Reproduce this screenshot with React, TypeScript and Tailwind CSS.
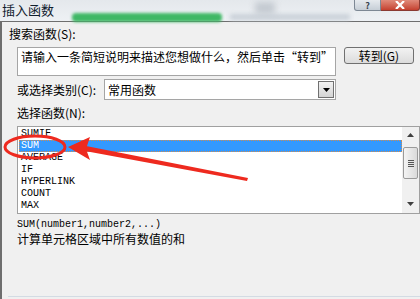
import React from 'react';

const cjk = "font-['SimSun','Noto_Sans_CJK_SC',sans-serif]";
const mono = "font-['Liberation_Mono','Noto_Sans_CJK_SC',monospace]";

const funcs = ['SUMIF', 'SUM', 'AVERAGE', 'IF', 'HYPERLINK', 'COUNT', 'MAX'];

export default function App() {
  return (
    <div className={`relative w-[420px] h-[299px] overflow-hidden bg-[#f0f0f0] text-[#000] ${cjk}`}>
      {/* Title bar (blurred aero glass) */}
      <div className="relative h-[21px] bg-gradient-to-b from-[#e4e8ec] to-[#eef1f4] flex items-start">
        <div className="absolute left-[72px] top-[13px] w-[150px] h-[9px] rounded-sm bg-[#3fb865] blur-[1.5px]" />
        <div className="absolute left-[230px] top-[14px] w-[120px] h-[6px] bg-[#c9d0d8] blur-[2px]" />
        <div className="absolute left-[255px] top-[2px] w-[20px] h-[12px] bg-[#c4cad1] blur-[3px]" />
        <span className="relative pl-[2px] pt-[2px] text-[13px] leading-[15px] text-[#10202e] font-['Noto_Sans_CJK_SC',sans-serif]">插入函数</span>
        <div className="ml-auto flex">
          <div className="w-[27px] h-[11px] rounded-bl-[3px] border border-t-0 border-[#7d8894] bg-gradient-to-b from-[#e6eaee] to-[#c6ced6] flex items-center justify-center text-[9px] leading-none text-[#3a4350] font-bold">
            ?
          </div>
          <div className="w-[39px] h-[11px] rounded-br-[3px] border border-t-0 border-l-0 border-[#8a3a32] bg-gradient-to-b from-[#e08a7a] to-[#c4402f] flex items-center justify-center">
            <svg width="10" height="8" viewBox="0 0 10 8">
              <path d="M1 0 L9 8 M9 0 L1 8" stroke="#fff" strokeWidth="2.2" />
            </svg>
          </div>
        </div>
      </div>

      {/* Dialog body */}
      <div className="h-[278px] border-t border-l-2 border-[#6e6e6e] flex flex-col">
        <div className="pl-[7px] pt-[5px] text-[12px] leading-[14px]">搜索函数(S):</div>

        <div className="flex items-start mt-[6px] pl-[15px]">
          <div className="w-[319px] h-[29px] border border-[#a5a5a5] bg-white px-[3px] pt-[2px] text-[12px] leading-[14px] whitespace-nowrap">
            请输入一条简短说明来描述您想做什么，然后单击“转到”
          </div>
          <button className="ml-[8px] w-[70px] h-[17px] rounded-[3px] border border-[#707070] bg-gradient-to-b from-[#f2f2f2] to-[#dcdcdc] text-[12px] leading-[14px] flex items-center justify-center">
            转到(G)
          </button>
        </div>

        <div className="flex items-center mt-[3px] pl-[15px]">
          <span className="w-[87px] text-[12px] leading-[14px]">或选择类别(C):</span>
          <div className="w-[232px] h-[21px] border border-[#a5a5a5] bg-white flex items-center">
            <span className="pl-[3px] text-[12px] leading-[14px] flex-1">常用函数</span>
            <div className="w-[16px] h-[17px] mr-[1px] border border-[#707070] bg-gradient-to-b from-[#f2f2f2] to-[#d4d4d4] flex items-center justify-center">
              <svg width="7" height="4" viewBox="0 0 7 4">
                <path d="M0 0 H7 L3.5 4 Z" fill="#000" />
              </svg>
            </div>
          </div>
        </div>

        <div className="pl-[15px] mt-[6px] text-[12px] leading-[14px]">选择函数(N):</div>

        <div className="ml-[15px] mt-[6px] w-[403px] h-[88px] border border-[#a0a0a0] bg-white flex">
          <div className="flex-1 pt-[1px] pl-[1px]">
            {funcs.map((f) => (
              <div
                key={f}
                className={`h-[12px] pl-[2px] text-[10px] leading-[12px] ${mono} ${
                  f === 'SUM' ? 'bg-[#3399ff] text-white outline-1 outline-dotted outline-[#d08c50] -outline-offset-1' : ''
                }`}
              >
                {f}
              </div>
            ))}
          </div>
          <div className="w-[17px] bg-[#f0f0f0] flex flex-col items-center">
            <svg className="mt-[6px]" width="7" height="4" viewBox="0 0 7 4">
              <path d="M3.5 0 L7 4 H0 Z" fill="#404040" />
            </svg>
            <div className="mt-[10px] w-[15px] h-[32px] rounded-[2px] border border-[#9a9a9a] bg-gradient-to-r from-[#f4f4f4] to-[#dadada] flex flex-col items-center justify-center gap-[1px]">
              <div className="w-[6px] h-[1px] bg-[#555]" />
              <div className="w-[6px] h-[1px] bg-[#555]" />
              <div className="w-[6px] h-[1px] bg-[#555]" />
              <div className="w-[6px] h-[1px] bg-[#555]" />
            </div>
            <svg className="mt-auto mb-[7px]" width="7" height="4" viewBox="0 0 7 4">
              <path d="M0 0 H7 L3.5 4 Z" fill="#404040" />
            </svg>
          </div>
        </div>

        <div className={`pl-[15px] mt-[5px] text-[10px] leading-[12px] ${mono}`}>SUM(number1,number2,...)</div>
        <div className="pl-[15px] mt-[1px] text-[12px] leading-[14px]">计算单元格区域中所有数值的和</div>

        <div className="mt-auto mb-[2px] ml-[6px] h-[1px] bg-[#d3dbe3]" />
      </div>

      {/* Red annotation: ellipse + arrow */}
      <svg className="absolute left-0 top-0 pointer-events-none" width="420" height="299" viewBox="0 0 420 299">
        <ellipse cx="35" cy="147" rx="30" ry="11" fill="none" stroke="#ee2a1f" strokeWidth="3" />
        <polygon points="247,181 85,151 86,146 248,178" fill="#ee2a1f" />
        <polygon points="68,147 90,137 86,149 90,160" fill="#ee2a1f" />
      </svg>
    </div>
  );
}
